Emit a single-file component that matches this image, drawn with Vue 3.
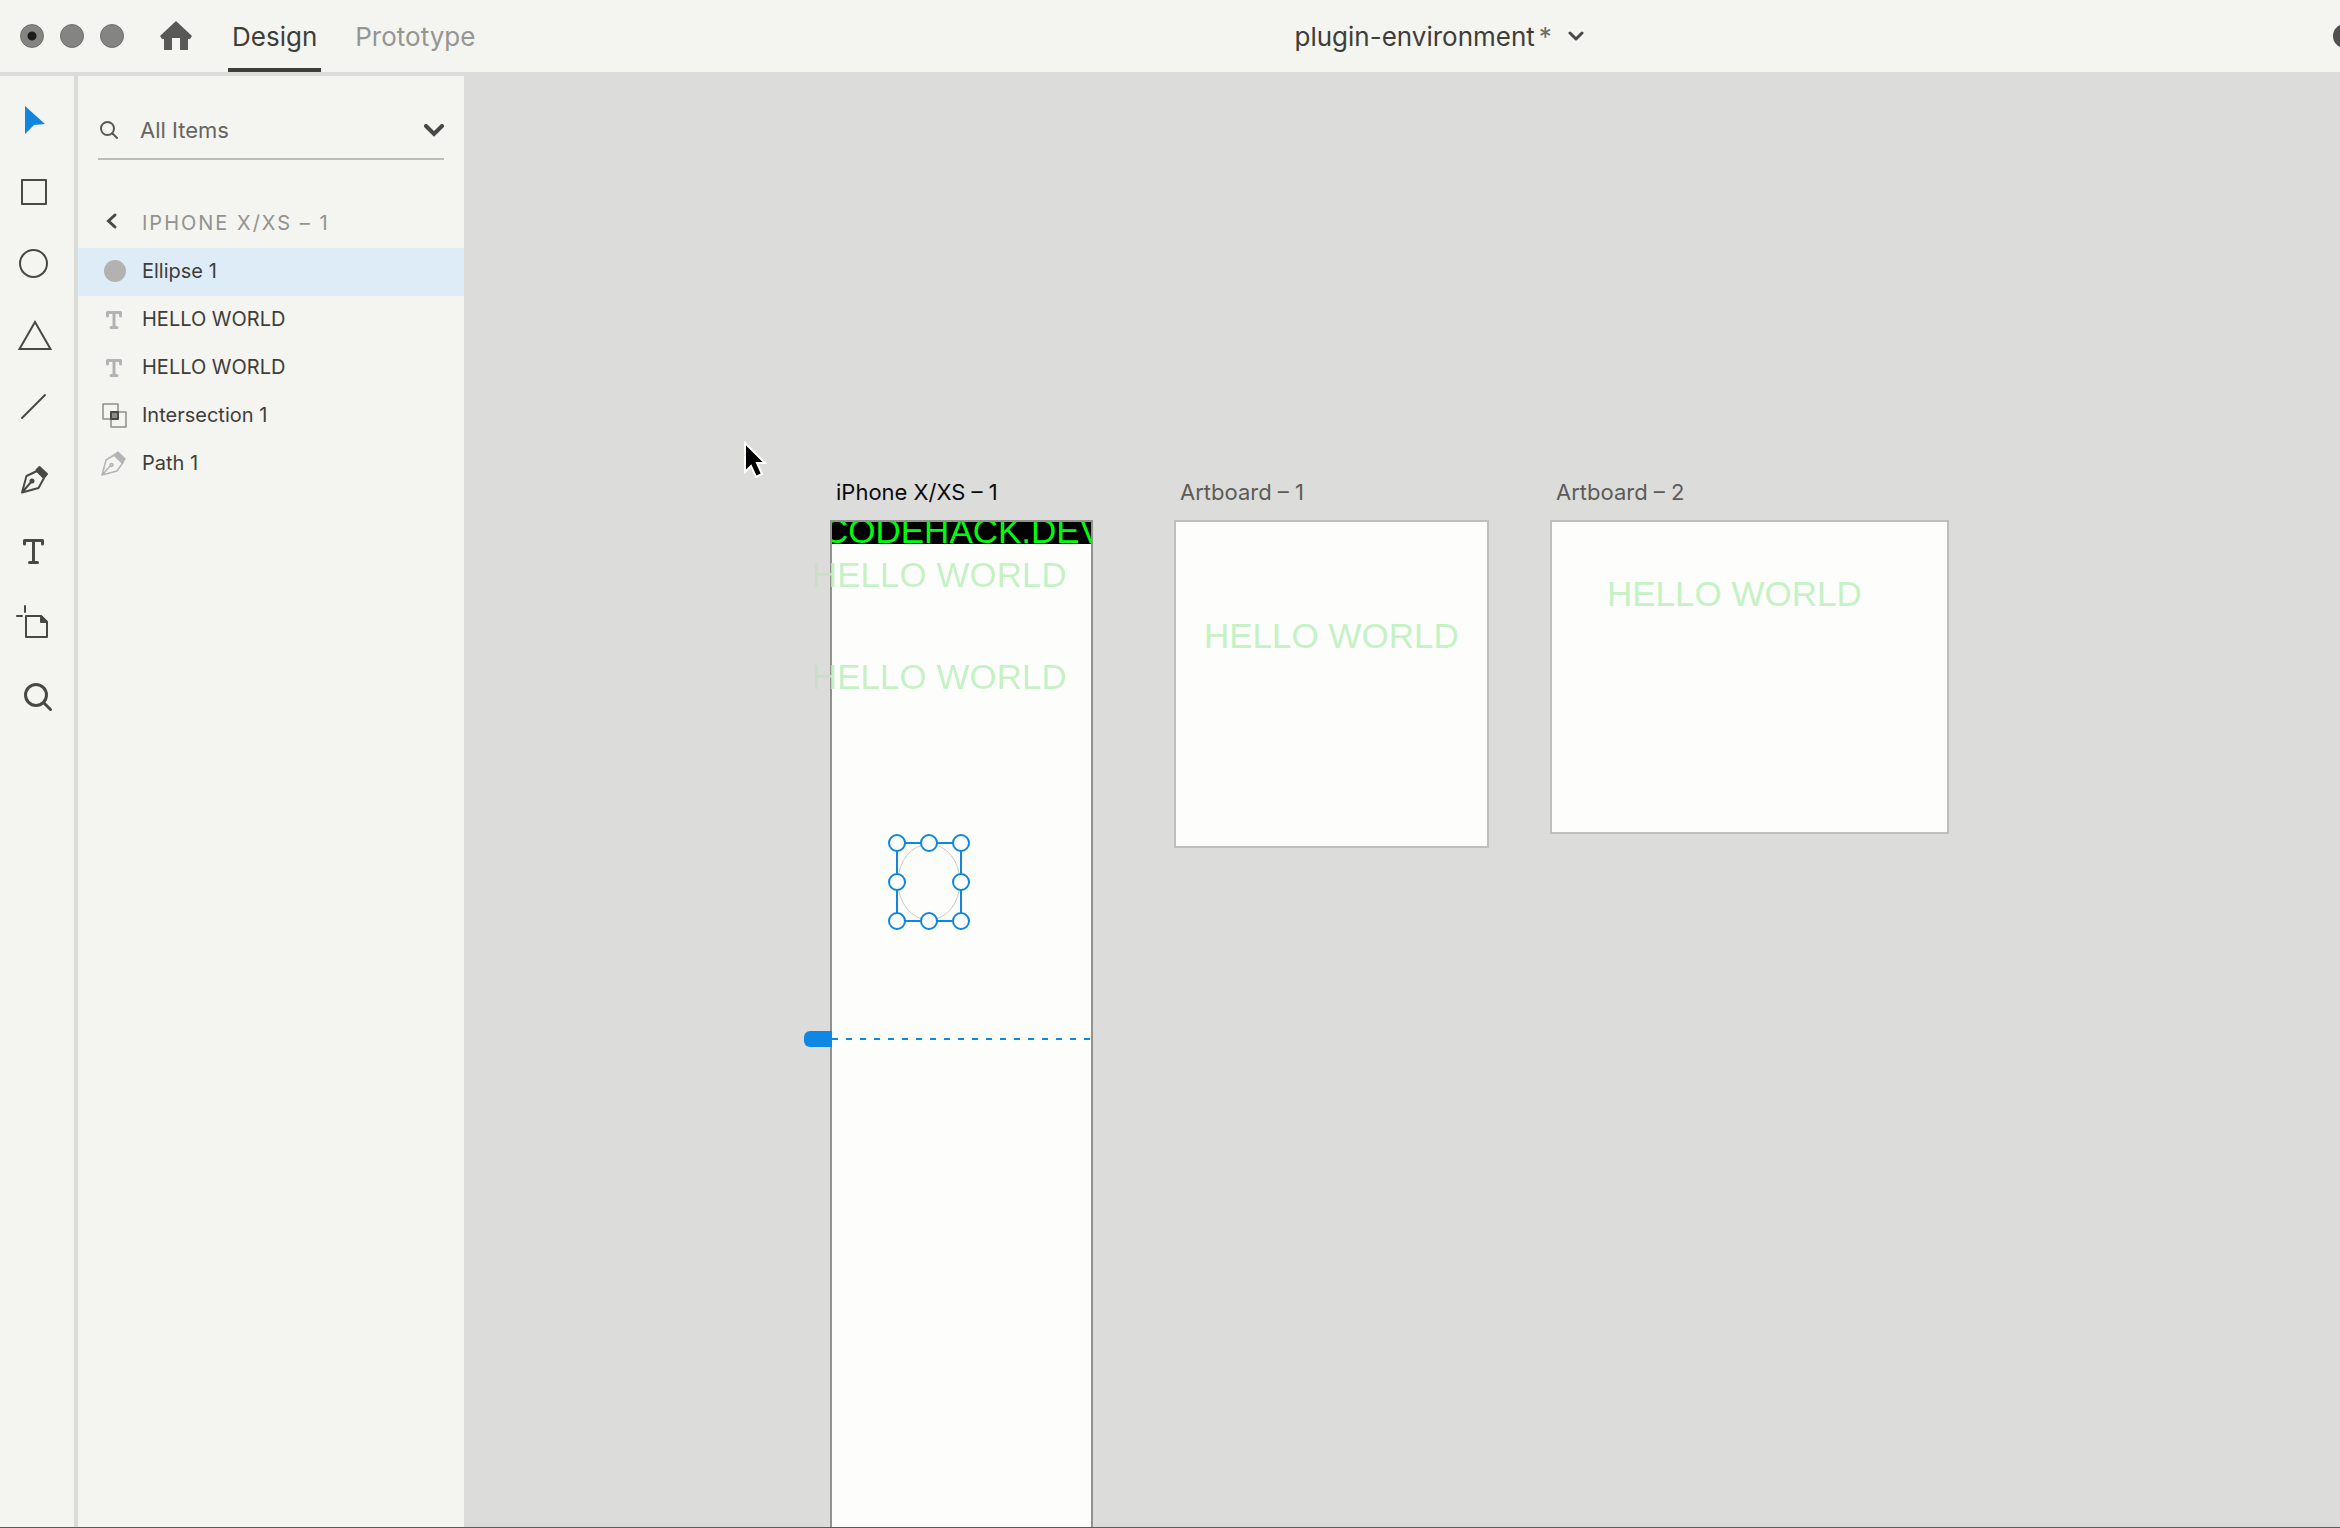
<script setup>
import { ref } from 'vue'

const filter = ref('All Items')
const tools = ['select', 'rectangle', 'ellipse', 'polygon', 'line', 'pen', 'text', 'artboard', 'zoom']
const activeTool = ref('select')
const layers = [
  { id: 1, kind: 'ellipse', name: 'Ellipse 1' },
  { id: 2, kind: 'text', name: 'HELLO WORLD' },
  { id: 3, kind: 'text', name: 'HELLO WORLD' },
  { id: 4, kind: 'intersection', name: 'Intersection 1' },
  { id: 5, kind: 'path', name: 'Path 1' },
]
const selected = ref(1)
const handles = [[11, 11], [43, 11], [75, 11], [11, 50], [75, 50], [11, 89], [43, 89], [75, 89]]
</script>

<template>
  <div class="app">
    <header class="topbar">
      <div class="lights">
        <span class="light edited"></span><span class="light"></span><span class="light"></span>
      </div>
      <button class="home" aria-label="Home">
        <svg width="32" height="30" viewBox="0 0 32 30"><path d="M16 0 32 15 30 18H28V29H20V17H12V29H4V18H2L0 15Z" fill="#585856" /></svg>
      </button>
      <nav class="tabs">
        <button class="tab active">Design</button>
        <button class="tab">Prototype</button>
      </nav>
      <button class="doc">
        <span>plugin-environment</span><span class="star">*</span>
        <svg width="16" height="10" viewBox="0 0 16 10"><path d="M2 2 8 8 14 2" fill="none" stroke="#484846" stroke-width="3" stroke-linecap="round" stroke-linejoin="round" /></svg>
      </button>
      <button class="account" aria-label="Account"></button>
    </header>

    <div class="body">
      <div class="toolbar">
        <button v-for="t in tools" :key="t" class="tool" :aria-label="t" @click="activeTool = t">
          <svg width="74" height="72" viewBox="0 0 74 72" fill="none" stroke="#484844" stroke-width="2" stroke-linejoin="round" stroke-linecap="round">
            <path v-if="t === 'select'" d="M25 22 45 40 34 41 25 50Z" fill="#1285dc" stroke="none" />
            <rect v-else-if="t === 'rectangle'" x="22" y="24" width="24" height="24" />
            <circle v-else-if="t === 'ellipse'" cx="33.500" cy="35.500" r="13.500" />
            <path v-else-if="t === 'polygon'" d="M35 22 19.500 49H50.500Z" stroke-linejoin="miter" />
            <path v-else-if="t === 'line'" d="M22 46 45 23" />
            <g v-else-if="t === 'pen'">
              <path d="M22 48.500 26.500 32 37 27 44 34 38.500 44Z M22 48.500 32 37" stroke-width="2" />
              <path d="M39.500 23 47 30 44 33.500 36.500 26Z" fill="#484844" />
              <circle cx="32" cy="37" r="1.500" fill="#484844" />
            </g>
            <path v-else-if="t === 'text'" d="M24.500 28V24.500H42.500V28M33.500 24.500V46.500M29.500 46.500H37.500" stroke-width="3" />
            <g v-else-if="t === 'artboard'">
              <path d="M25 18V24M17 28H22" />
              <path d="M26 28H41L47 34V49H26Z" />
              <path d="M41 28V34H47Z" fill="#484844" />
            </g>
            <path v-else d="M46.500 35A10.500 10.500 0 1 1 25.500 35A10.500 10.500 0 1 1 46.500 35ZM43.500 42.500 50.500 49.500" stroke-width="3" />
          </svg>
        </button>
      </div>

      <aside class="panel">
        <div class="search">
          <svg width="18" height="18" viewBox="0 0 18 18" fill="none" stroke="#585856" stroke-width="2" stroke-linecap="round"><circle cx="7.500" cy="7.500" r="6.500" /><path d="M12.500 12.500 17 17" /></svg>
          <input v-model="filter" aria-label="Filter layers" />
          <button aria-label="Filter options">
            <svg width="20" height="13" viewBox="0 0 20 13"><path d="M2 2 10 10 18 2" fill="none" stroke="#484846" stroke-width="4" stroke-linecap="round" stroke-linejoin="miter" /></svg>
          </button>
        </div>
        <button class="back">
          <svg width="32" height="48" viewBox="0 0 32 48"><path d="M17 15 10.500 21 17 27" fill="none" stroke="#484844" stroke-width="3" stroke-linecap="round" /></svg>
          <span>IPHONE X/XS – 1</span>
        </button>
        <ul class="layers">
          <li v-for="l in layers" :key="l.id">
            <button class="layer" :class="{ selected: l.id === selected }" @click="selected = l.id">
              <svg width="32" height="48" viewBox="0 0 32 48" fill="none" stroke-linejoin="round" stroke-linecap="round">
                <circle v-if="l.kind === 'ellipse'" cx="17" cy="23" r="11" fill="#b2b2b0" />
                <path v-else-if="l.kind === 'text'" d="M9.500 20V16.500H22.500V20M16 16.500V31.500M13 31.500H19" stroke="#b4b2b4" stroke-width="3" />
                <g v-else-if="l.kind === 'intersection'" stroke="#8c8c88" stroke-width="1.500">
                  <rect x="5" y="12" width="15" height="15" /><rect x="13" y="20" width="15" height="15" />
                  <rect x="13" y="20" width="7" height="7" fill="#8c8c88" stroke="#484846" stroke-width="2" />
                </g>
                <g v-else stroke="#b4b4b6" stroke-width="1.500">
                  <path d="M4 35 8 20 17 14.500 25 22.500 19 31ZM4 35 13 25" />
                  <path d="M20 12 27 19 24 23 16 15Z" fill="#b4b4b6" /><circle cx="13.500" cy="25" r="1.500" />
                </g>
              </svg>
              <span>{{ l.name }}</span>
            </button>
          </li>
        </ul>
      </aside>

      <main class="canvas">
        <section class="board phone">
          <h2 class="label current">iPhone X/XS – 1</h2>
          <div class="banner"><span>CODEHACK.DEV</span></div>
          <p class="art first">HELLO WORLD</p>
          <p class="art second">HELLO WORLD</p>
          <svg class="selection" width="86" height="100" viewBox="0 0 86 100">
            <ellipse cx="43" cy="50" rx="31" ry="38" fill="none" stroke="#c8c8c4" />
            <g fill="#fdfdfd" stroke="#0f87dc" stroke-width="2">
              <rect x="11" y="11" width="64" height="78" fill="none" />
              <circle v-for="(h, i) in handles" :key="i" :cx="h[0]" :cy="h[1]" r="8" />
            </g>
          </svg>
          <div class="guide"></div>
          <div class="grip"></div>
        </section>
        <section class="board one">
          <h2 class="label">Artboard – 1</h2>
          <p class="art">HELLO WORLD</p>
        </section>
        <section class="board two">
          <h2 class="label">Artboard – 2</h2>
          <p class="art">HELLO WORLD</p>
        </section>
        <svg class="cursor" width="24" height="38" viewBox="0 0 24 38">
          <path d="M2 2V31L8 25 13 36 19 33 14 22H22Z" fill="#000" stroke="#fff" stroke-width="2" />
        </svg>
      </main>
    </div>
  </div>
</template>

<style>
body { margin: 0; }
</style>

<style scoped>
* { box-sizing: border-box; }
button, input { font: inherit; color: inherit; background: none; border: 0; padding: 0; margin: 0; }
svg { display: block; flex: none; }
.app {
  height: 100vh;
  display: flex;
  flex-direction: column;
  overflow: hidden;
  background: #f4f4f0;
  border-bottom: 1px solid #5c5c58;
  font-family: Inter, "Liberation Sans", sans-serif;
  color: #3e3e38;
}
.topbar {
  flex: none;
  height: 76px;
  display: flex;
  align-items: center;
  padding-left: 20px;
  border-bottom: 4px solid #dcdcda;
  font-size: 26px;
  overflow: hidden;
}
.lights { display: flex; gap: 16px; }
.light { width: 24px; height: 24px; border-radius: 50%; background: #848482; border: 1px solid #70706e; }
.light.edited { background: radial-gradient(circle, #1c1c1c 4px, #848482 5px); }
.home { margin: 0 36px; }
.tabs { display: flex; gap: 30px; align-self: stretch; }
.tab { padding: 4px 4px 0; color: #959591; border-bottom: 4px solid transparent; }
.tab.active { color: #3e3e38; border-color: #3e3e38; }
.doc { flex: 1; display: flex; align-items: center; justify-content: center; padding-left: 66px; }
.star { margin: 0 16px 0 4px; color: #6c6c68; }
.account { width: 24px; height: 24px; margin-right: -17px; border-radius: 50%; background: #50504e; }
.body { flex: 1; display: flex; min-height: 0; }
.toolbar { flex: none; width: 78px; padding-top: 8px; border-right: 4px solid #dbdbd7; }
.tool { display: block; width: 74px; height: 72px; }
.panel { flex: none; width: 386px; font-size: 20px; }
.search {
  margin: 0 20px 40px;
  padding: 40px 0 14px 2px;
  display: flex;
  align-items: center;
  gap: 22px;
  border-bottom: 2px solid #bcbcb8;
  font-size: 22px;
  color: #666662;
}
.search input { flex: 1; min-width: 0; height: 28px; outline: 0; }
.back, .layer { display: flex; align-items: center; gap: 12px; width: 100%; height: 48px; padding-left: 20px; text-align: left; }
.back span, .layer span { padding-bottom: 2px; }
.back { color: #92928e; letter-spacing: 2px; }
.layers { list-style: none; margin: 0; padding: 0; }
.layer.selected { background: #deecf7; }
.canvas { position: relative; flex: 1; min-width: 0; background: #dcdcda; overflow: hidden; }
.board { position: absolute; top: 444px; background: #fdfdfc; border: 2px solid #bebebc; }
.phone { left: 366px; bottom: -8px; width: 263px; border-color: #92928e; }
.one { left: 710px; width: 315px; height: 328px; }
.two { left: 1086px; width: 399px; height: 314px; }
.label { position: absolute; left: 4px; bottom: 100%; margin: 0 0 16px; font-size: 22px; font-weight: 400; line-height: 28px; white-space: nowrap; color: #5c5c58; }
.label.current { color: #0a0a0a; }
.banner { height: 22px; overflow: hidden; background: #000; color: #00fa10; font: 35px/40px "Liberation Sans", Arial, sans-serif; }
.banner span { display: block; margin: -11px 0 0 -9px; white-space: nowrap; }
.art { position: absolute; margin: 0; font: 35px/40px "Liberation Sans", Arial, sans-serif; white-space: nowrap; color: #c4f2c4; }
.phone .art { left: -20px; background: linear-gradient(90deg, #cbdfc8 20px, #c4f2c4 20px); background-clip: text; color: transparent; }
.first { top: 33px; }
.second { top: 135px; }
.one .art { left: 28px; top: 94px; }
.two .art { left: 55px; top: 52px; }
.selection { position: absolute; left: 54px; top: 310px; }
.guide { position: absolute; left: 0; right: 0; top: 516px; height: 2px; background: repeating-linear-gradient(90deg, #0f87dc 0 6px, transparent 6px 14px); }
.grip { position: absolute; left: -28px; top: 509px; width: 28px; height: 16px; border-radius: 6px 0 0 6px; background: #0f87e4; }
.cursor { position: absolute; left: 279px; top: 365px; }
</style>
